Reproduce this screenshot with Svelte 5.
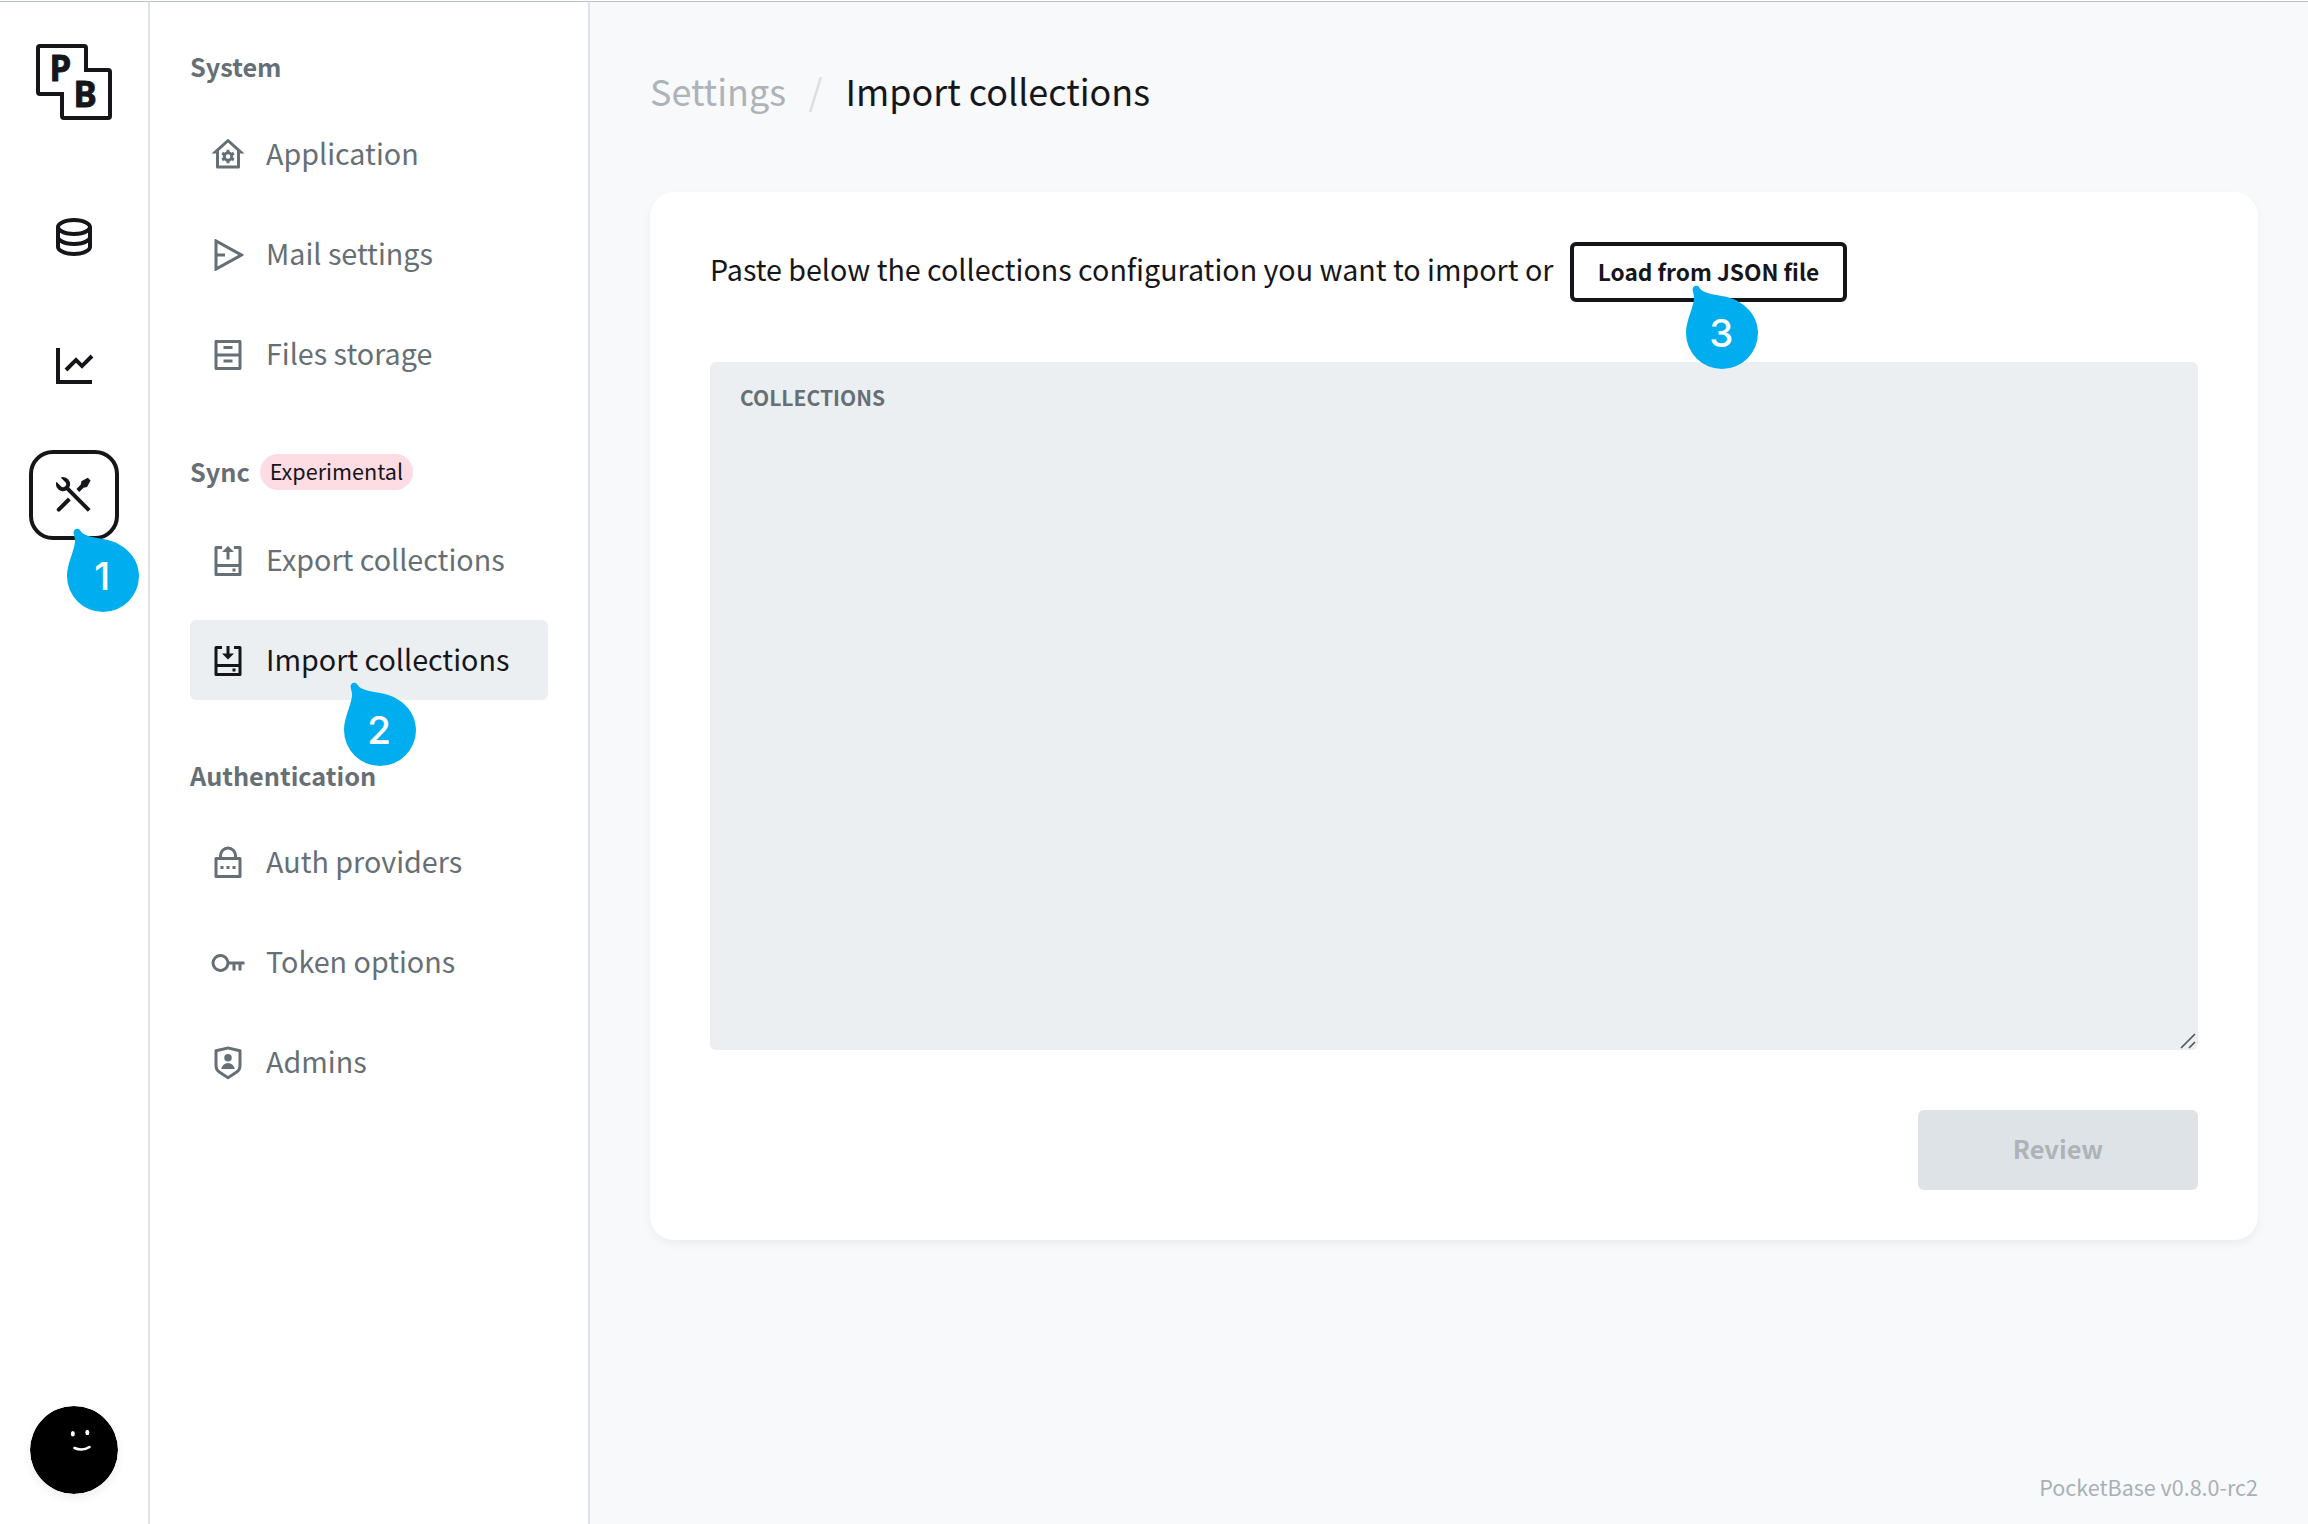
<script>
  const icons = {
    database: 'M5 12.5c0 .313.461.858 1.53 1.393C7.914 14.585 9.877 15 12 15c2.123 0 4.086-.415 5.47-1.107 1.069-.535 1.53-1.08 1.53-1.393v-2.171C17.35 11.349 14.827 12 12 12s-5.35-.652-7-1.671V12.5zm14 2.829C17.35 16.349 14.827 17 12 17s-5.35-.652-7-1.671V17.5c0 .313.461.858 1.53 1.393C7.914 19.585 9.877 20 12 20c2.123 0 4.086-.415 5.47-1.107 1.069-.535 1.53-1.08 1.53-1.393v-2.171zM3 17.5v-10C3 5.015 7.03 3 12 3s9 2.015 9 4.5v10c0 2.485-4.03 4.5-9 4.5s-9-2.015-9-4.5zm9-7.5c2.123 0 4.086-.415 5.47-1.107C18.539 8.358 19 7.813 19 7.5c0-.313-.461-.858-1.53-1.393C16.086 5.415 14.123 5 12 5c-2.123 0-4.086.415-5.47 1.107C5.461 6.642 5 7.187 5 7.5c0 .313.461.858 1.53 1.393C7.914 9.585 9.877 10 12 10z',
    chart: 'M5 3v16h16v2H3V3h2zm15.293 3.293l1.414 1.414L16 13.414l-3-2.999-4.293 4.292-1.414-1.414L13 7.586l3 2.999 4.293-4.292z',
    tools: 'M5.33 3.271a3.5 3.5 0 0 1 4.254 4.963l10.709 10.71-1.414 1.414-10.71-10.71a3.502 3.502 0 0 1-4.962-4.255L5.444 7.63a1.5 1.5 0 1 0 2.121-2.121L5.329 3.27zm10.367 1.884l3.182-1.768 1.414 1.414-1.768 3.182-1.768.354-2.12 2.121-1.415-1.414 2.121-2.121.354-1.768zm-6.718 8.132l1.414 1.414-5.303 5.303a1 1 0 0 1-1.492-1.327l.078-.087 5.303-5.303z',
    home: 'M19 21H5a1 1 0 0 1-1-1v-9H1l10.327-9.388a1 1 0 0 1 1.346 0L23 11h-3v9a1 1 0 0 1-1 1zM6 19h12V9.158l-6-5.454-6 5.454V19zm2.591-5.191a3.508 3.508 0 0 1 0-1.622l-.991-.572 1-1.732.991.573a3.495 3.495 0 0 1 1.404-.812V8.5h2v1.144c.532.159 1.01.44 1.403.812l.992-.573 1 1.731-.991.573a3.508 3.508 0 0 1 0 1.622l.991.572-1 1.731-.991-.572a3.495 3.495 0 0 1-1.404.811v1.145h-2V16.35a3.495 3.495 0 0 1-1.404-.811l-.991.572-1-1.73.991-.573zm3.404.688a1.5 1.5 0 1 0 0-2.998 1.5 1.5 0 0 0 0 2.998z',
    send: 'M3.741 1.408l18.462 10.154a.5.5 0 0 1 0 .876L3.741 22.592A.5.5 0 0 1 3 22.154V1.846a.5.5 0 0 1 .741-.438zM5 13v6.617L18.85 12 5 4.383V11h5v2H5z',
    drawer: 'M3 2.992C3 2.444 3.445 2 3.993 2h16.014a1 1 0 0 1 .993.992v18.016a.993.993 0 0 1-.993.992H3.993A.993.993 0 0 1 3 21.008V2.992zM19 11V4H5v7h14zm0 2H5v7h14v-7zM9 6h6v2H9V6zm0 9h6v2H9v-2z',
    upload: 'M8 2v2H5l-.001 10h14L19 4h-3V2h4a1 1 0 0 1 1 1v18a1 1 0 0 1-1 1H4a1 1 0 0 1-1-1V3a1 1 0 0 1 1-1h4zm10.999 14h-14L5 20h14l-.001-4zM17 17v2h-2v-2h2zM12 2l4 4h-3v5h-2V6H8l4-4z',
    install: 'M8 2v2H5l-.001 10h14L19 4h-3V2h4a1 1 0 0 1 1 1v18a1 1 0 0 1-1 1H4a1 1 0 0 1-1-1V3a1 1 0 0 1 1-1h4zm10.999 14h-14L5 20h14l-.001-4zM17 17v2h-2v-2h2zM13 2v5h3l-4 4-4-4h3V2h2z',
    lock: 'M18 8h2a1 1 0 0 1 1 1v12a1 1 0 0 1-1 1H4a1 1 0 0 1-1-1V9a1 1 0 0 1 1-1h2V7a6 6 0 1 1 12 0v1zM5 10v10h14V10H5zm6 4h2v2h-2v-2zm-4 0h2v2H7v-2zm8 0h2v2h-2v-2zm1-6V7a4 4 0 1 0-8 0v1h8z',
    key: 'M12.917 13A6.002 6.002 0 0 1 1 12a6 6 0 0 1 11.917-1H23v2h-2v4h-2v-4h-2v4h-2v-4h-2.083zM7 16a4 4 0 1 0 0-8 4 4 0 0 0 0 8z',
    shield: 'M3.783 2.826L12 1l8.217 1.826a1 1 0 0 1 .783.976v9.987a6 6 0 0 1-2.672 4.992L12 23l-6.328-4.219A6 6 0 0 1 3 13.79V3.802a1 1 0 0 1 .783-.976zM5 4.604v9.185a4 4 0 0 0 1.781 3.328L12 20.597l5.219-3.48A4 4 0 0 0 19 13.79V4.604L12 3.05 5 4.604zM12 11a2.5 2.5 0 1 1 0-5 2.5 2.5 0 0 1 0 5zm-4.473 5a4.5 4.5 0 0 1 8.946 0H7.527z'
  };

  const mainNav = [
    { id: 'Collections', icon: icons.database },
    { id: 'Logs', icon: icons.chart },
    { id: 'Settings', icon: icons.tools, active: true, step: 1 }
  ];

  const groups = [
    {
      title: 'System',
      items: [
        { label: 'Application', icon: icons.home },
        { label: 'Mail settings', icon: icons.send },
        { label: 'Files storage', icon: icons.drawer }
      ]
    },
    {
      title: 'Sync',
      tag: 'Experimental',
      items: [
        { label: 'Export collections', icon: icons.upload },
        { label: 'Import collections', icon: icons.install, active: true, step: 2 }
      ]
    },
    {
      title: 'Authentication',
      items: [
        { label: 'Auth providers', icon: icons.lock },
        { label: 'Token options', icon: icons.key },
        { label: 'Admins', icon: icons.shield }
      ]
    }
  ];
</script>

{#snippet marker(n)}
  <svg class="marker marker-{n}" viewBox="-36 -48 72 84">
    <path d="M-36 0C-36-12-29.5-23-28-34C-27.6-38-29.4-41-29.4-43.6C-29.2-47.6-24.2-48.4-22.6-45.2C-18.5-38.5-7-38.8 4-36.2C22-32 36-18 36 0A36 36 0 0 1-36 0Z" />
    <text x="-0.8" y="14">{n}</text>
  </svg>
{/snippet}

<div class="app">
  <aside class="rail">
    <svg class="logo" viewBox="0 0 76 76">
      <path d="M4 2H48a2 2 0 0 1 2 2V26H72a2 2 0 0 1 2 2V72a2 2 0 0 1-2 2H28a2 2 0 0 1-2-2V50H4a2 2 0 0 1-2-2V4a2 2 0 0 1 2-2Z" />
      <text x="13.5" y="37.400">P</text>
      <text x="37.500" y="63.400">B</text>
    </svg>
    <nav class="rail-nav">
      {#each mainNav as item}
        <a class="rail-item" class:active={item.active} aria-label={item.id}>
          <svg viewBox="0 0 24 24"><path d={item.icon} /></svg>
          {#if item.step}{@render marker(item.step)}{/if}
        </a>
      {/each}
    </nav>
    <svg class="avatar" viewBox="0 0 88 88">
      <circle cx="44" cy="44" r="44" />
      <ellipse class="eye" cx="42.8" cy="27.8" rx="2" ry="2.7" />
      <ellipse class="eye" cx="57.3" cy="26.4" rx="2" ry="2.7" />
      <path d="M44.500 42Q52.500 45.500 59.500 41" />
    </svg>
  </aside>

  <aside class="sidebar">
    {#each groups as group}
      <section>
        <h2 class:tagged={group.tag}>
          {group.title}
          {#if group.tag}<span class="tag"><span>{group.tag}</span></span>{/if}
        </h2>
        <div class="links">
          {#each group.items as item}
            <a class="link" class:active={item.active}>
              <svg viewBox="0 0 24 24"><path d={item.icon} /></svg>
              <span>{item.label}</span>
              {#if item.step}{@render marker(item.step)}{/if}
            </a>
          {/each}
        </div>
      </section>
    {/each}
  </aside>

  <main>
    <header>
      <span class="crumb">Settings</span>
      <span class="slash">/</span>
      <span>Import collections</span>
    </header>
    <div class="card">
      <div class="intro">
        <span class="text">Paste below the collections configuration you want to import or</span>
        <button class="load">Load from JSON file{@render marker(3)}</button>
      </div>
      <div class="field">
        <label for="collections">COLLECTIONS</label>
        <svg class="grip" viewBox="0 0 16 16"><path d="M1 15L15 1M9 15L15 9" /></svg>
      </div>
      <div class="actions">
        <button class="review" disabled>Review</button>
      </div>
    </div>
    <footer>PocketBase v0.8.0-rc2</footer>
  </main>
</div>

<style>
  :global(body) {
    margin: 0;
    background: #fff;
  }
  .app {
    box-sizing: border-box;
    display: flex;
    width: 2308px;
    height: 1524px;
    padding-top: 1px;
    overflow: hidden;
    color: #16161a;
    background: #fff;
    font-family: 'Noto Sans CJK SC', 'Open Sans', sans-serif;
    font-size: 28.7px;
  }
  .rail,
  .sidebar,
  main {
    box-sizing: border-box;
    border-top: 1px solid #b9c0c7;
  }
  button {
    font-family: inherit;
    margin: 0;
  }

  .rail {
    display: flex;
    flex-direction: column;
    align-items: center;
    width: 150px;
    padding: 42px 0 30px;
    border-right: 2px solid #dee3e8;
  }
  .logo {
    width: 76px;
    height: 76px;
  }
  .logo path {
    fill: none;
    stroke: #16161a;
    stroke-width: 4;
  }
  .logo text {
    font: 700 35px 'Noto Sans', sans-serif;
    fill: #16161a;
    stroke: #16161a;
    stroke-width: 0.8;
    stroke-linejoin: round;
  }
  .rail-nav {
    display: flex;
    flex-direction: column;
    gap: 40px;
    margin-top: 71px;
  }
  .rail-item {
    position: relative;
    box-sizing: border-box;
    display: flex;
    align-items: center;
    justify-content: center;
    width: 90px;
    height: 90px;
    border: 4px solid transparent;
    border-radius: 24px;
  }
  .rail-item.active {
    margin-top: -1px;
    border-color: #16161a;
  }
  .rail-item > svg:first-child {
    width: 48px;
    height: 48px;
    fill: #16161a;
  }
  .avatar {
    width: 88px;
    height: 88px;
    margin-top: auto;
    border-radius: 50%;
    box-shadow: 0 4px 10px rgba(0, 0, 0, 0.07);
  }
  .avatar .eye {
    fill: #fff;
  }
  .avatar path {
    fill: none;
    stroke: #fff;
    stroke-width: 2.6;
    stroke-linecap: round;
  }

  .sidebar {
    width: 440px;
    padding: 44px 40px 0;
    border-right: 2px solid #dee3e8;
  }
  section + section {
    margin-top: 55px;
  }
  h2 {
    display: flex;
    align-items: center;
    height: 40px;
    margin: 0 0 27px;
    color: #666f75;
    font-size: 25.3px;
    font-weight: 700;
    line-height: 40px;
  }
  section:first-child h2 {
    margin-bottom: 28px;
  }
  h2.tagged {
    height: 44px;
    gap: 10px;
  }
  .tag {
    box-sizing: border-box;
    display: flex;
    justify-content: center;
    width: 153px;
    height: 36px;
    margin-top: 2px;
    border-radius: 18px;
    color: #16161a;
    background: #fddde3;
    font-size: 21.6px;
    font-weight: 400;
    line-height: 33px;
  }
  .links {
    display: flex;
    flex-direction: column;
    gap: 20px;
  }
  .link {
    position: relative;
    display: flex;
    align-items: center;
    gap: 20px;
    width: 338px;
    height: 80px;
    padding-left: 20px;
    border-radius: 6px;
    color: #666f75;
    fill: #666f75;
  }
  .link > svg:first-child {
    width: 36px;
    height: 36px;
    margin-top: 2px;
  }
  .link > span {
    padding-bottom: 2px;
    line-height: 40px;
  }
  .link.active {
    color: #16161a;
    fill: #16161a;
    background: #ebeff2;
  }

  main {
    display: flex;
    flex: 1;
    flex-direction: column;
    padding: 68px 50px 19px 60px;
    background: #f8f9fa;
  }
  header {
    display: flex;
    height: 40px;
    font-size: 35.9px;
    line-height: 40px;
  }
  .crumb {
    color: #adb3b8;
  }
  .slash {
    margin: 0 23px 0 22.5px;
    color: #dcdfe2;
  }
  .card {
    box-sizing: border-box;
    height: 1048px;
    margin-top: 82px;
    padding: 50px 60px;
    border-radius: 24px;
    background: #fff;
    box-shadow: 0 4px 10px rgba(0, 0, 0, 0.05);
  }
  .intro {
    display: flex;
    align-items: center;
    gap: 16px;
    height: 60px;
  }
  .intro .text {
    width: 844px;
    padding-bottom: 7px;
    font-size: 28.65px;
    line-height: 40px;
    white-space: nowrap;
  }
  .load {
    position: relative;
    box-sizing: border-box;
    width: 277px;
    height: 60px;
    padding: 0;
    border: 4px solid #16161a;
    border-radius: 6px;
    color: #16161a;
    background: #fff;
    font-size: 22.7px;
    font-weight: 700;
    line-height: 40px;
    white-space: nowrap;
  }
  .field {
    position: relative;
    box-sizing: border-box;
    height: 688px;
    margin-top: 60px;
    padding: 17px 30px;
    border-radius: 6px;
    background: #ebeff2;
  }
  .field label {
    display: block;
    color: #666f75;
    font-size: 21.04px;
    font-weight: 700;
    line-height: 36px;
  }
  .grip {
    position: absolute;
    right: 2px;
    bottom: 1px;
    width: 16px;
    height: 16px;
    fill: none;
    stroke: #50545a;
    stroke-width: 1.6;
  }
  .actions {
    display: flex;
    justify-content: flex-end;
    margin-top: 60px;
  }
  .review {
    width: 280px;
    height: 80px;
    padding: 0 0 4px;
    border: 0;
    border-radius: 6px;
    color: #adb3b8;
    background: #dee3e8;
    font-size: 25.4px;
    font-weight: 700;
  }
  footer {
    margin-top: auto;
    color: #a9b0b7;
    font-size: 21.5px;
    line-height: 36px;
    text-align: right;
  }

  .marker {
    position: absolute;
    z-index: 2;
    width: 72px;
    height: 84px;
    overflow: visible;
  }
  .marker path {
    fill: #00aeef;
  }
  .marker text {
    fill: #fff;
    font: 500 38.5px Inter, sans-serif;
    text-anchor: middle;
  }
  .marker-1 {
    left: 34px;
    top: 74px;
  }
  .marker-2 {
    left: 154px;
    top: 62px;
  }
  .marker-3 {
    left: 112px;
    top: 39px;
  }
</style>
